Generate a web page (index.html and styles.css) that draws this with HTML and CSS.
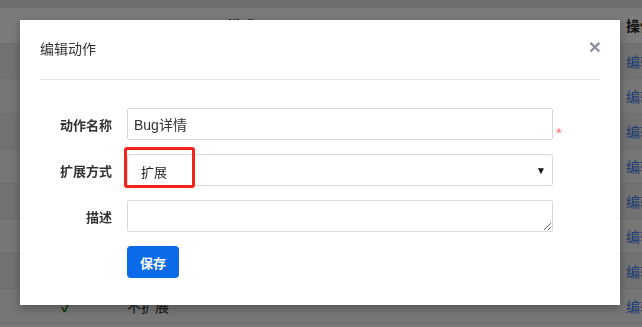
FILE: index.html
```html
<!DOCTYPE html>
<html>
  <head>
    <meta charset="utf-8" />
    <link rel="stylesheet" href="styles.css">
  </head>

  <body>
    <div class="topbar"></div>
    <table class="list">
      <tr class="head">
        <th class="c-check"></th>
        <th class="c-mode"></th>
        <th class="c-name">模式</th>
        <th class="c-op">操作</th>
      </tr>
      <tr><td></td><td></td><td></td><td><a>编辑</a></td></tr>
      <tr><td></td><td></td><td></td><td><a>编辑</a></td></tr>
      <tr><td></td><td></td><td></td><td><a>编辑</a></td></tr>
      <tr><td></td><td></td><td></td><td><a>编辑</a></td></tr>
      <tr><td></td><td></td><td></td><td><a>编辑</a></td></tr>
      <tr><td></td><td></td><td></td><td><a>编辑</a></td></tr>
      <tr><td></td><td></td><td></td><td><a>编辑</a></td></tr>
      <tr>
        <td class="c-check"><span class="tick">&#10003;</span></td>
        <td>不扩展</td>
        <td></td>
        <td><a>编辑</a></td>
      </tr>
    </table>

    <div class="backdrop"></div>

    <div class="modal">
      <div class="modal-header">
        <span class="modal-title">编辑动作</span>
        <span class="close">&times;</span>
      </div>

      <form class="modal-body">
        <label class="label">动作名称</label>
        <input class="field" type="text" value="Bug详情" />
        <span class="required">*</span>

        <label class="label">扩展方式</label>
        <div class="select">
          <span class="select-text">扩展</span>
          <span class="select-arrow">&#9660;</span>
        </div>
        <span></span>

        <label class="label">描述</label>
        <textarea class="field area"></textarea>
        <span></span>

        <span></span>
        <div class="actions"><button type="button" class="btn-save">保存</button></div>
        <span></span>
      </form>

      <!-- highlight marker -->
      <div class="mark"></div>
    </div>
  </body>
</html>
```

FILE: styles.css
```css
html,
body {
  margin: 0;
  height: 100%;
  overflow: hidden;
  background: #efefef;
  font-family: 'Liberation Sans', 'Noto Sans CJK SC', sans-serif;
  font-size: 13px;
  color: #333;
}

.topbar {
  height: 8px;
  background: #dedede;
}

.list {
  width: 700px;
  border-collapse: separate;
  border-spacing: 0;
  table-layout: fixed;
}

.list th,
.list td {
  height: 34px;
  padding: 0;
  border-bottom: 1px solid #d8d8d8;
  text-align: left;
  font-size: 14px;
  box-sizing: border-box;
}

.list td {
  height: 35px;
}

.list tr.head th {
  height: 36px;
  background: #f6f6f6;
  font-weight: bold;
  color: #222;
  padding-bottom: 1px;
}

.list tr:nth-child(even) td {
  background: #e4e4e4;
}

.list tr:nth-child(odd) td {
  background: #ececec;
}

.list .c-check {
  width: 127px;
  text-align: left;
  padding-left: 61px;
}

.c-mode {
  width: 100px;
}

.c-name {
  width: 399px;
}

.list a {
  color: #3d78e6;
}

.tick {
  color: #1d6b2a;
  font-weight: bold;
}

.backdrop {
  position: fixed;
  inset: 0;
  background: rgba(0, 0, 0, 0.5);
}

.modal {
  position: absolute;
  left: 20px;
  top: 20px;
  width: 600px;
  height: 285px;
  background: #fff;
  box-shadow: 0 3px 9px rgba(0, 0, 0, 0.3);
  box-sizing: border-box;
  padding: 0 20px;
}

.modal-header {
  display: flex;
  justify-content: space-between;
  align-items: center;
  height: 60px;
  border-bottom: 1px solid #e5e5e5;
  padding-bottom: 3px;
  box-sizing: border-box;
}

.modal-title {
  font-size: 14px;
  color: #333;
}

.close {
  font-size: 21px;
  font-weight: bold;
  color: #8a8f99;
  line-height: 1;
  margin-top: -4px;
  margin-right: -1px;
}

.modal-body {
  display: grid;
  grid-template-columns: 72px 426px 1fr;
  grid-auto-rows: 32px;
  column-gap: 15px;
  row-gap: 14px;
  align-items: center;
  padding-top: 28px;
}

.label {
  text-align: right;
  font-weight: bold;
  color: #333;
}

.field {
  box-sizing: border-box;
  height: 32px;
  width: 100%;
  margin: 0;
  border: 1px solid #d9d9d9;
  border-radius: 2px;
  padding: 0 6px;
  font-family: 'Liberation Sans', 'Noto Sans CJK SC', sans-serif;
  font-size: 14px;
  color: #333;
}

.area {
  resize: vertical;
  padding-top: 4px;
  display: block;
}

.required {
  align-self: start;
  color: #ff6b6b;
  font-size: 15px;
  line-height: 1;
  margin-left: -12px;
  margin-top: 17px;
}

.select {
  box-sizing: border-box;
  height: 32px;
  border: 1px solid #d9d9d9;
  border-radius: 2px;
  display: flex;
  align-items: center;
  justify-content: space-between;
  padding: 0 6px 0 13px;
}

.select-text {
  font-size: 13px;
  padding-top: 3px;
  color: #222;
}

.select-arrow {
  font-size: 10px;
  color: #111;
}

.actions {
  height: 32px;
}

.btn-save {
  display: block;
  height: 32px;
  width: 52px;
  border: none;
  border-radius: 4px;
  background: #0b6ae8;
  color: #fff;
  font-family: 'Liberation Sans', 'Noto Sans CJK SC', sans-serif;
  font-size: 13px;
  font-weight: bold;
}

.mark {
  position: absolute;
  left: 104px;
  top: 127px;
  width: 65px;
  height: 35px;
  border: 3px solid #f3241b;
  border-radius: 3px;
}
```
